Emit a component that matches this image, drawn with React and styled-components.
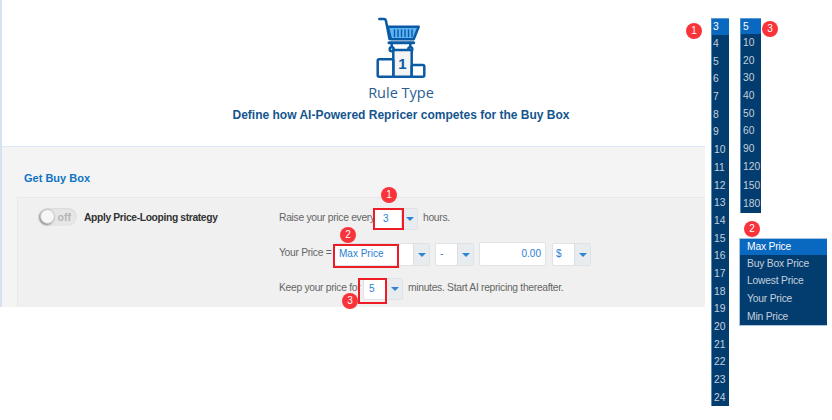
import React from "react";
import styled, { createGlobalStyle } from "styled-components";

const GlobalStyle = createGlobalStyle`
  html, body {
    margin: 0;
    padding: 0;
    background: #fff;
    font-family: "Liberation Sans", Arial, sans-serif;
  }
`;

const Page = styled.div`
  width: 832px;
  height: 420px;
  display: flex;
  overflow: hidden;
  position: relative;
`;

const Main = styled.div`
  width: 703px;
  height: 307px;
  border-left: 2px solid #d6e2f2;
  display: flex;
  flex-direction: column;
`;

const Header = styled.div`
  height: 147px;
  flex-shrink: 0;
  box-sizing: border-box;
  padding: 15px 0 0 95px;
  border-bottom: 1px solid #dbe8f6;
  display: flex;
  flex-direction: column;
  align-items: center;
`;

const RuleIcon = styled.svg`
  width: 50px;
  height: 64px;
  display: block;
`;

const RuleTitle = styled.div`
  margin-top: 5px;
  font-size: 14.5px;
  line-height: 18px;
  color: #2a5d8f;
  font-family: "Open Sans", sans-serif;
`;

const RuleSub = styled.div`
  margin-top: 5px;
  font-size: 12px;
  line-height: 16px;
  font-weight: 700;
  color: #14558f;
`;

const Panel = styled.div`
  flex: 1;
  min-height: 0;
  background: #f4f4f4;
  padding: 24px 0 0 15px;
  display: flex;
  flex-direction: column;
`;

const SectionTitle = styled.div`
  margin-left: 7px;
  font-size: 11px;
  line-height: 14px;
  font-weight: 700;
  color: #0d74c4;
`;

const Card = styled.div`
  flex: 1;
  min-height: 0;
  margin-top: 12px;
  background: #f0f0f0;
  border-top: 1px solid #e8e8e8;
  border-left: 1px solid #e8e8e8;
  display: flex;
  padding: 10px 0 0 21px;
`;

const ToggleCol = styled.div`
  width: 240px;
  display: flex;
  align-items: flex-start;
  gap: 7px;
`;

const Toggle = styled.div`
  width: 38px;
  height: 18px;
  box-sizing: border-box;
  border-radius: 9px;
  background: #e6e6e6;
  box-shadow: 0 0 0 1px #f2f2f2, inset 0 1px 2px #d8d8d8;
  display: flex;
  align-items: center;
  justify-content: flex-end;
  padding-right: 6px;
  position: relative;
  font-size: 10.5px;
  font-weight: 700;
  color: #b5b5b5;
`;

const ToggleKnob = styled.div`
  position: absolute;
  left: 1px;
  top: 1px;
  width: 15px;
  height: 15px;
  border-radius: 50%;
  background: #f6f6f6;
  border: 1px solid #c4c4c4;
  box-sizing: border-box;
  box-shadow: -1px 1px 2px #8a8a8a;
`;

const ToggleLabel = styled.div`
  font-size: 10.3px;
  letter-spacing: -0.36px;
  line-height: 20px;
  font-weight: 700;
  color: #333;
  white-space: nowrap;
`;

const Form = styled.div`
  display: flex;
  flex-direction: column;
`;

const FormRow = styled.div`
  height: ${(p) => p.$height}px;
  display: flex;
  align-items: flex-start;
  font-size: 10.3px;
  letter-spacing: -0.3px;
  color: #666;
`;

const RowLabel = styled.span`
  width: ${(p) => p.$width}px;
  flex-shrink: 0;
  line-height: 20px;
  white-space: nowrap;
`;

const RowSuffix = styled.span`
  margin-left: 5px;
  line-height: 20px;
  white-space: nowrap;
`;

const Select = styled.div`
  width: ${(p) => p.$width}px;
  height: ${(p) => p.$tall || 22}px;
  box-sizing: border-box;
  margin-left: ${(p) => p.$left || 0}px;
  display: flex;
  border: 1px solid #e0e3e6;
  border-radius: 2px;
  background: #fff;
  flex-shrink: 0;
`;

const SelectValue = styled.div`
  flex: 1;
  padding-left: ${(p) => p.$pad}px;
  font-size: 10px;
  letter-spacing: 0;
  line-height: 20px;
  color: #2a7ed3;
`;

const SelectArrow = styled.div`
  width: 15px;
  background: #e9ecef;
  border-left: 1px solid #dcdfe2;
  display: flex;
  align-items: center;
  justify-content: center;

  &::after {
    content: "";
    border-left: 4px solid transparent;
    border-right: 4px solid transparent;
    border-top: 4px solid #2c84d4;
  }
`;

const NumberInput = styled.div`
  width: 67px;
  height: 24px;
  box-sizing: border-box;
  margin: -1px 0 0 5px;
  padding-right: 4px;
  border: 1px solid #e0e3e6;
  border-radius: 2px;
  background: #fff;
  font-size: 10px;
  letter-spacing: 0;
  line-height: 22px;
  text-align: right;
  color: #2a7ed3;
`;

const Highlight = styled.div`
  position: absolute;
  left: ${(p) => p.$left}px;
  top: ${(p) => p.$top}px;
  width: ${(p) => p.$width}px;
  height: ${(p) => p.$height}px;
  border: 2px solid #ee1c25;
  box-sizing: border-box;
  pointer-events: none;
`;

const Badge = styled.div`
  position: absolute;
  left: ${(p) => p.$left}px;
  top: ${(p) => p.$top}px;
  width: 16px;
  height: 16px;
  border-radius: 50%;
  background: #f9333a;
  color: #fff;
  font-size: 10px;
  line-height: 16px;
  text-align: center;
`;

const Side = styled.div`
  padding: 18px 0 0 6px;
  display: flex;
  gap: 11px;
  align-items: flex-start;
`;

const HoursList = styled.div`
  width: 18px;
  background: #033d70;
  border-left: 1px solid #5a8ab8;
  border-top: 1px solid #5a9ad8;
  box-sizing: border-box;
  display: flex;
  flex-direction: column;
`;

const MinutesCol = styled.div`
  display: flex;
  flex-direction: column;
  align-items: flex-start;
`;

const MinutesList = styled(HoursList)`
  width: 21px;
`;

const ListItem = styled.div`
  height: ${(p) => p.$height}px;
  line-height: ${(p) => p.$height}px;
  padding-left: ${(p) => p.$pad}px;
  font-size: 10.3px;
  letter-spacing: ${(p) => p.$track || 0}px;
  white-space: nowrap;
  color: ${(p) => (p.$active ? "#fff" : "#c3d0dc")};
  background: ${(p) => (p.$active ? "#0968bf" : "transparent")};
`;

const PriceList = styled.div`
  margin: 25px 0 0 -1px;
  width: 88px;
  box-sizing: border-box;
  background: #033d70;
  border: 1px solid #a9c4de;
  border-width: 1px 0 1px 1px;
  display: flex;
  flex-direction: column;
`;

const hours = Array.from({ length: 22 }, (_, i) => i + 3);
const minutes = [5, 10, 20, 30, 40, 50, 60, 90, 120, 150, 180];
const prices = ["Max Price", "Buy Box Price", "Lowest Price", "Your Price", "Min Price"];

function PodiumIcon() {
  return (
    <RuleIcon viewBox="0 0 50 64" fill="none" stroke="#0b5aa5" strokeWidth="2.5" strokeLinejoin="round" strokeLinecap="round">
      <path d="M3.3 4 H8 Q9.6 4 10 6 L13.5 24" />
      <path d="M11.7 11.7 H42.7 L37.7 24.3 H15 Z" fill="#5db4f5" />
      <path d="M18.5 15 V21.5 M22 15 V21.5 M25.5 15 V21.5 M29 15 V21.5 M32.5 15 V21.5 M36 15 V21.5" strokeWidth="1.4" />
      <path d="M13 27.7 H37.7" strokeWidth="3" />
      <path d="M15.7 28 V32 M34.3 28 V32" />
      <circle cx="15.7" cy="34.3" r="2" fill="#fff" />
      <circle cx="34.3" cy="34.3" r="2" fill="#fff" />
      <rect x="17.3" y="35" width="18.4" height="26.7" fill="#f4f4f4" />
      <rect x="1.7" y="44.3" width="15.6" height="17.4" rx="1.5" fill="#fff" />
      <rect x="35.7" y="50" width="12.6" height="11.7" rx="1.5" fill="#fff" />
      <text x="26.5" y="54" textAnchor="middle" fontSize="15" fontWeight="700" fill="#0b5aa5" stroke="none" fontFamily="'Liberation Sans', sans-serif">1</text>
    </RuleIcon>
  );
}

export default function App() {
  return (
    <Page>
      <GlobalStyle />
      <Main>
        <Header>
          <PodiumIcon />
          <RuleTitle>Rule Type</RuleTitle>
          <RuleSub>Define how AI-Powered Repricer competes for the Buy Box</RuleSub>
        </Header>
        <Panel>
          <SectionTitle>Get Buy Box</SectionTitle>
          <Card>
            <ToggleCol>
              <Toggle>
                off
                <ToggleKnob />
              </Toggle>
              <ToggleLabel>Apply Price-Looping strategy</ToggleLabel>
            </ToggleCol>
            <Form>
              <FormRow $height={35}>
                <RowLabel $width={95}>Raise your price every</RowLabel>
                <Select $width={44}>
                  <SelectValue $pad={8}>3</SelectValue>
                  <SelectArrow />
                </Select>
                <RowSuffix>hours.</RowSuffix>
              </FormRow>
              <FormRow $height={35}>
                <RowLabel $width={54}>Your Price =</RowLabel>
                <Select $width={97} $tall={23}>
                  <SelectValue $pad={5}>Max Price</SelectValue>
                  <SelectArrow />
                </Select>
                <Select $width={39} $left={5} $tall={23}>
                  <SelectValue $pad={4}>-</SelectValue>
                  <SelectArrow />
                </Select>
                <NumberInput>0.00</NumberInput>
                <Select $width={39} $left={6} $tall={23}>
                  <SelectValue $pad={3}>$</SelectValue>
                  <SelectArrow />
                </Select>
              </FormRow>
              <FormRow $height={28}>
                <RowLabel $width={84}>Keep your price for</RowLabel>
                <Select $width={40}>
                  <SelectValue $pad={5}>5</SelectValue>
                  <SelectArrow />
                </Select>
                <RowSuffix>minutes. Start AI repricing thereafter.</RowSuffix>
              </FormRow>
            </Form>
          </Card>
        </Panel>
      </Main>
      <Side>
        <HoursList>
          {hours.map((h, i) => (
            <ListItem key={h} $pad={h < 10 ? 1 : 2} $active={i === 0} $height={i === 0 ? 16 : 17.7}>
              {h}
            </ListItem>
          ))}
        </HoursList>
        <MinutesCol>
          <MinutesList>
            {minutes.map((m, i) => (
              <ListItem key={m} $pad={2} $active={i === 0} $height={i === 0 ? 15 : m === 150 ? 19.7 : 17.7}>
                {m}
              </ListItem>
            ))}
          </MinutesList>
          <PriceList>
            {prices.map((p, i) => (
              <ListItem key={p} $pad={7} $track={-0.2} $active={i === 0} $height={i === 0 ? 16 : 17.6}>
                {p}
              </ListItem>
            ))}
          </PriceList>
        </MinutesCol>
      </Side>

      <Highlight $left={373} $top={208} $width={31} $height={22} />
      <Highlight $left={333} $top={244} $width={66} $height={24} />
      <Highlight $left={358} $top={278} $width={29} $height={26} />
      <Badge $left={381} $top={187}>1</Badge>
      <Badge $left={340} $top={227}>2</Badge>
      <Badge $left={342} $top={293}>3</Badge>
      <Badge $left={686} $top={23}>1</Badge>
      <Badge $left={762} $top={21}>3</Badge>
      <Badge $left={744} $top={221}>2</Badge>
    </Page>
  );
}
